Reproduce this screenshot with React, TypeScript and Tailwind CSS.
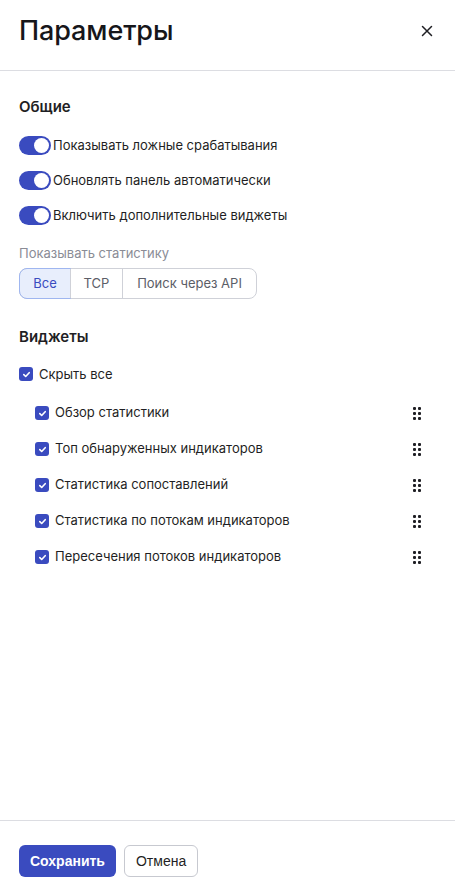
import { useState } from 'react'

const BLUE = 'bg-[#3a4bbf]'

function Toggle({ label }: { label: string }) {
  return (
    <div className="flex h-[18px] items-center gap-[2px]">
      <div className={`flex h-[19px] w-[32px] items-center justify-end rounded-full ${BLUE} pr-[2px]`}>
        <div className="h-[15px] w-[15px] rounded-full bg-white" />
      </div>
      <span className="text-[13px] text-[#1f1f24]">{label}</span>
    </div>
  )
}

function Check() {
  return (
    <div className={`flex h-[14px] w-[14px] items-center justify-center rounded-[3px] ${BLUE}`}>
      <svg width="9" height="9" viewBox="0 0 10 10" fill="none">
        <path d="M2 5.2 4.1 7.2 8 3" stroke="white" strokeWidth="1.8" strokeLinecap="round" strokeLinejoin="round" />
      </svg>
    </div>
  )
}

function DragHandle() {
  return (
    <div className="grid grid-cols-2 gap-x-[2px] gap-y-[2px]">
      {[0, 1, 2, 3, 4, 5].map((i) => (
        <div key={i} className="h-[3px] w-[3px] rounded-[1px] bg-[#1f1f24]" />
      ))}
    </div>
  )
}

const widgets = [
  'Обзор статистики',
  'Топ обнаруженных индикаторов',
  'Статистика сопоставлений',
  'Статистика по потокам индикаторов',
  'Пересечения потоков индикаторов',
]

export default function App() {
  const [mode, setMode] = useState('all')
  const segments = [
    { id: 'all', label: 'Все', w: 'w-[50px]' },
    { id: 'tcp', label: 'TCP', w: 'w-[52px]' },
    { id: 'api', label: 'Поиск через API', w: 'w-[134px]' },
  ]

  return (
    <div className="flex h-[891px] w-[455px] flex-col bg-white font-['Inter',sans-serif] text-[#1f1f24]">
      <div className="flex h-[71px] shrink-0 items-center justify-between border-b border-[#dcdde2] pb-[8px] pl-[19px] pr-[18px]">
        <h1 className="text-[27px] font-medium tracking-[-0.1px] text-[#16161a]">Параметры</h1>
        <button className="p-1">
          <svg width="12" height="12" viewBox="0 0 12 12" fill="none">
            <path d="M1.5 1.5 10.5 10.5M10.5 1.5 1.5 10.5" stroke="#1f1f24" strokeWidth="1.5" strokeLinecap="round" />
          </svg>
        </button>
      </div>

      <div className="flex flex-1 flex-col px-[19px] pt-[25px]">
        <h2 className="text-[15px] font-semibold">Общие</h2>
        <div className="mt-[18px] flex flex-col gap-[17px]">
          <Toggle label="Показывать ложные срабатывания" />
          <Toggle label="Обновлять панель автоматически" />
          <Toggle label="Включить дополнительные виджеты" />
        </div>

        <div className="mt-[19px] text-[13px] text-[#8a8c96]">Показывать статистику</div>
        <div className="mt-[5px] flex h-[31px] w-fit rounded-[8px] border border-[#cfd1d8] text-[13px]">
          {segments.map((s, i) => (
            <button
              key={s.id}
              onClick={() => setMode(s.id)}
              className={`${s.w} flex items-center justify-center ${i > 0 ? 'border-l border-[#cfd1d8]' : ''} ${
                i === 0 ? 'rounded-l-[7px]' : ''
              } ${i === segments.length - 1 ? 'rounded-r-[7px]' : ''} ${
                mode === s.id
                  ? 'bg-[#e8eefc] text-[#3a4bbf] outline outline-1 outline-[#9fb6f0]'
                  : 'text-[#5c5e68]'
              }`}
            >
              {s.label}
            </button>
          ))}
        </div>

        <h2 className="mt-[27px] text-[15px] font-semibold">Виджеты</h2>

        <div className="mt-[16px] flex items-center gap-[6px]">
          <Check />
          <span className="text-[13px]">Скрыть все</span>
        </div>

        <div className="mt-[20px] flex flex-col gap-[18px] pl-[16px] pr-[15px]">
          {widgets.map((w) => (
            <div key={w} className="flex h-[18px] items-center justify-between">
              <div className="flex items-center gap-[6px]">
                <Check />
                <span className="text-[13px]">{w}</span>
              </div>
              <DragHandle />
            </div>
          ))}
        </div>
      </div>

      <div className="flex h-[71px] shrink-0 items-start gap-[8px] border-t border-[#dcdde2] px-[19px] pt-[24px] font-['Liberation_Sans',sans-serif]">
        <button className={`h-[32px] rounded-[6px] ${BLUE} px-[11px] text-[14px] font-bold text-white`}>
          Сохранить
        </button>
        <button className="h-[32px] rounded-[6px] border border-[#c7c9d0] bg-white px-[11px] text-[14px] text-[#1f1f24]">
          Отмена
        </button>
      </div>
    </div>
  )
}
